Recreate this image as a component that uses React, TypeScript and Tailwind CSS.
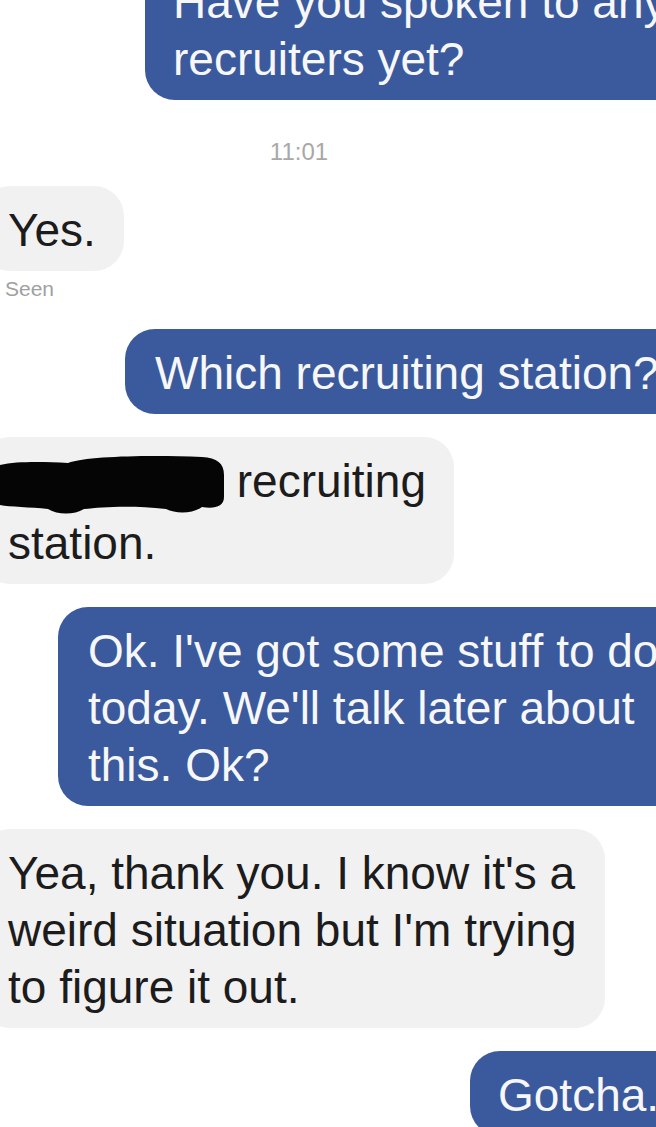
import React from 'react';

const blue = 'bg-[#3b5a9e] text-[#f7f7f7]';
const gray = 'bg-[#f1f1f1] text-[#1c1c1c]';
const pad = 'rounded-[30px] pl-[28px] pr-[28px] pt-[16px] pb-[12px]';

// the scribbled-out name in the second reply
const Redaction: React.FC = () => (
  <svg
    width="224"
    height="62"
    viewBox="0 0 224 62"
    className="inline-block align-top -ml-[8px]"
  >
    <path
      d="M0 12 C18 8 45 9 68 10 C88 3 150 2 202 4 C217 5 224 10 224 22 L224 44 C224 54 214 56 202 54 C192 61 176 61 166 56 C132 52 102 54 84 56 C74 62 58 62 48 56 C30 54 10 54 0 52 Z"
      fill="#050505"
    />
  </svg>
);

const App: React.FC = () => {
  return (
    <div className="w-[656px] h-[1127px] overflow-hidden bg-white font-['Liberation_Sans',Arial,sans-serif]">
      <div className="flex flex-col text-[46px] leading-[57px]">
        {/* outgoing, cut at the top */}
        <div className={`${blue} ${pad} self-start w-max whitespace-nowrap ml-[145px] -mt-[42px]`}>
          Have you spoken to any
          <br />
          recruiters yet?
        </div>

        <div className="w-[598px] text-center text-[24px] leading-[24px] text-[#a8a8a8] mt-[40px]">
          11:01
        </div>

        <div className={`${gray} ${pad} self-start w-max whitespace-nowrap -ml-[20px] mt-[22px]`}>
          Yes.
        </div>
        <div className="text-[21px] leading-[22px] text-[#a0a0a0] pl-[5px] mt-[7px]">Seen</div>

        <div className={`${blue} ${pad} self-start w-max whitespace-nowrap ml-[125px] mt-[29px] pl-[30px]`}>
          Which recruiting station?
        </div>

        <div className={`${gray} ${pad} self-start w-max whitespace-nowrap -ml-[20px] mt-[23px]`}>
          <Redaction /> recruiting
          <br />
          station.
        </div>

        <div className={`${blue} ${pad} self-start w-max whitespace-nowrap ml-[58px] mt-[23px] pl-[30px]`}>
          Ok. I've got some stuff to do
          <br />
          today. We'll talk later about
          <br />
          this. Ok?
        </div>

        <div className={`${gray} ${pad} self-start w-max whitespace-nowrap -ml-[20px] mt-[23px]`}>
          Yea, thank you. I know it's a
          <br />
          weird situation but I'm trying
          <br />
          to figure it out.
        </div>

        <div className={`${blue} ${pad} self-start w-max whitespace-nowrap ml-[470px] mt-[23px]`}>
          Gotcha.
        </div>
      </div>
    </div>
  );
};

export default App;
